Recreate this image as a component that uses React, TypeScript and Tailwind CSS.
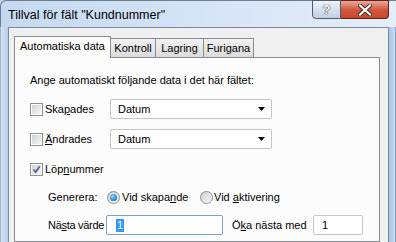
import React from 'react';

const font = { fontFamily: '"Liberation Sans", Arial, sans-serif' };

// Win7-ish checkbox
const CheckBox = ({ checked }: { checked?: boolean }) => (
  <div className="w-[13px] h-[13px] border border-[#8e8f8f] bg-white p-[1px] shrink-0">
    <div className="w-full h-full bg-gradient-to-br from-[#d4d4d4] to-[#f4f4f4] relative">
      {checked && (
        <svg viewBox="0 0 9 9" className="absolute inset-0 w-full h-full">
          <path d="M1.5 4.5 L3.6 7 L7.8 1.2" fill="none" stroke="#4a5f97" strokeWidth="1.7" />
        </svg>
      )}
    </div>
  </div>
);

const Radio = ({ checked }: { checked?: boolean }) => (
  <div className="w-[13px] h-[13px] rounded-full border border-[#8e8f8f] bg-gradient-to-br from-[#cfcfcf] to-[#fafafa] flex items-center justify-center shrink-0">
    {checked && (
      <div className="w-[7px] h-[7px] rounded-full bg-[radial-gradient(circle_at_40%_35%,#8fd6ff,#1d7bc4_70%,#0e4f8a)]" />
    )}
  </div>
);

const Dropdown = ({ value }: { value: string }) => (
  <div className="w-[162px] h-[20px] border border-[#c5c5c5] rounded-[2px] bg-white flex items-center pl-[7px] pr-[6px]">
    <span className="flex-1">{value}</span>
    <svg width="7" height="4" viewBox="0 0 7 4">
      <path d="M0 0 H7 L3.5 4 Z" fill="#000" />
    </svg>
  </div>
);

const Tab = ({ label, active, w }: { label: React.ReactNode; active?: boolean; w: string }) => (
  <div
    className={
      active
        ? `${w} h-[22px] border border-b-0 border-[#898c95] bg-[#fcfcfc] flex items-center justify-center pb-[2px] relative top-[1px] z-10`
        : `${w} h-[19px] border border-b-0 border-l-0 border-[#898c95] bg-gradient-to-b from-[#f2f2f2] to-[#dcdcdc] flex items-center justify-center`
    }
  >
    {label}
  </div>
);

export default function App() {
  return (
    <div className="w-[396px] h-[242px] overflow-hidden flex flex-col text-[11px] text-black bg-[#c4d8ef]" style={font}>
      {/* title bar */}
      <div className="h-[27px] flex items-start bg-gradient-to-r from-[#c4d9f1] via-[#d5e4f5] to-[#e4eef9] border-t border-l border-[#6f7f93] rounded-tl-[6px]">
        <div className="pl-[7px] pt-[5px] text-[12.5px] text-black">Tillval för fält "Kundnummer"</div>
        <div className="ml-auto mr-[7px] flex h-[19px] -mt-[1px]">
          <div className="w-[29px] h-full border border-[#4f5d72] rounded-bl-[4px] bg-gradient-to-b from-[#eef3fa] via-[#d6e1ee] to-[#c2d0e2] flex items-center justify-center text-[13px] font-bold text-white [text-shadow:0_0_1px_#222,0_0_1px_#222]">
            ?
          </div>
          <div className="w-[48px] h-full border border-l-0 border-[#5a2418] rounded-br-[4px] bg-gradient-to-b from-[#e9a99a] via-[#d0583f] to-[#c9452b] flex items-center justify-center">
            <svg width="14" height="12" viewBox="0 0 14 12">
              <path d="M2 1.5 L12 10.5 M12 1.5 L2 10.5" stroke="#3b2a26" strokeWidth="4" strokeLinecap="square" />
              <path d="M2 1.5 L12 10.5 M12 1.5 L2 10.5" stroke="#fff" strokeWidth="2.2" strokeLinecap="square" />
            </svg>
          </div>
        </div>
      </div>

      {/* frame + client */}
      <div className="flex flex-1 min-h-0">
        <div className="w-[8px] bg-gradient-to-r from-[#d5e4f4] to-[#b7cfea] border-l border-[#9fb6d0]" />
        <div className="flex-1 bg-[#f0f0f0] border-l border-t border-r border-[#7a8a9e] pl-[5px] pr-[8px] pt-[6px] flex flex-col">
          {/* tabs */}
          <div className="flex items-end h-[23px]">
            <Tab w="w-[97px]" active label="Automatiska data" />
            <Tab w="w-[45px]" label="Kontroll" />
            <Tab w="w-[48px]" label="Lagring" />
            <Tab w="w-[50px]" label="Furigana" />
          </div>
          {/* panel */}
          <div className="flex-1 border border-[#898c95] bg-[#fcfcfc] pl-[15px]">
            <div className="mt-[15px] h-[14px] leading-[14px]">Ange automatiskt följande data i det här fältet:</div>

            <div className="mt-[12px] h-[20px] flex items-center">
              <div className="w-[80px] flex items-center gap-[2px]">
                <CheckBox />
                <span>Ska<u>p</u>ades</span>
              </div>
              <Dropdown value="Datum" />
            </div>

            <div className="mt-[10px] h-[20px] flex items-center">
              <div className="w-[80px] flex items-center gap-[2px]">
                <CheckBox />
                <span><u>Ä</u>ndrades</span>
              </div>
              <Dropdown value="Datum" />
            </div>

            <div className="mt-[13px] h-[14px] flex items-center gap-[2px]">
              <CheckBox checked />
              <span>Löp<u>n</u>ummer</span>
            </div>

            <div className="mt-[14px] h-[14px] flex items-center pl-[18px]">
              <span className="w-[59px]">Generera:</span>
              <div className="w-[93px] flex items-center gap-[2px]">
                <Radio checked />
                <span>Vid skapa<u>n</u>de</span>
              </div>
              <div className="flex items-center gap-[1px]">
                <Radio />
                <span>Vid <u>a</u>ktivering</span>
              </div>
            </div>

            <div className="mt-[11px] h-[20px] flex items-center pl-[18px]">
              <span className="w-[58px] shrink-0 whitespace-nowrap tracking-[-0.3px]">Nä<u>s</u>ta värde</span>
              <div className="w-[117px] h-[20px] shrink-0 border border-[#7ca0c8] rounded-[2px] bg-white flex items-center pl-[9px]">
                <span className="bg-[#3399ff] text-white leading-[13px] px-[1px]">1</span>
              </div>
              <span className="ml-[9px] w-[81px] shrink-0 whitespace-nowrap">Ö<u>k</u>a nästa med</span>
              <div className="w-[50px] h-[20px] shrink-0 border border-[#c5c5c5] rounded-[2px] bg-white flex items-center pl-[8px]">
                1
              </div>
            </div>
          </div>
        </div>
        <div className="w-[7px] bg-gradient-to-r from-[#a9c4e4] to-[#c9dbf0] border-r border-[#8aa3c2]" />
      </div>
    </div>
  );
}
